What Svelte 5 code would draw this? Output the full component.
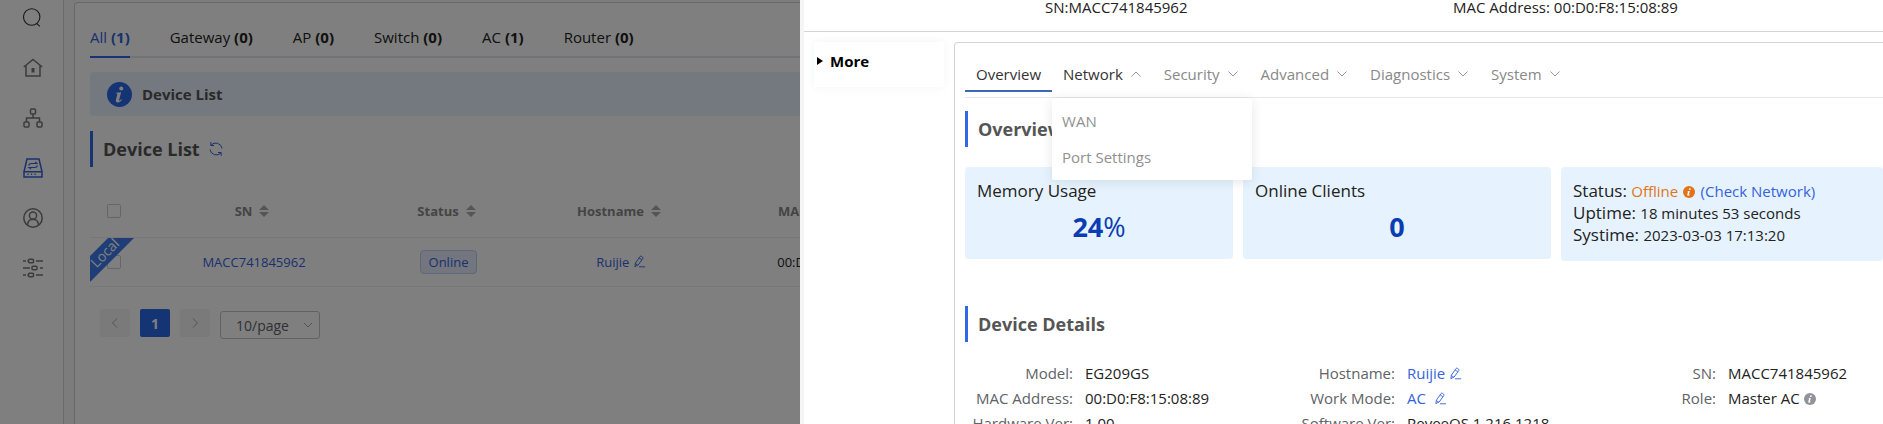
<script lang="ts">
	type Detail = {
		label: string;
		value: string;
		editable?: boolean;
		info?: boolean;
	};

	const tabs = [
		{ name: 'All', count: 1 },
		{ name: 'Gateway', count: 0 },
		{ name: 'AP', count: 0 },
		{ name: 'Switch', count: 0 },
		{ name: 'AC', count: 1 },
		{ name: 'Router', count: 0 },
	];

	const columns = ['SN', 'Status', 'Hostname', 'MAC Address'];

	const menus = ['Network', 'Security', 'Advanced', 'Diagnostics', 'System'];

	const networkItems = ['WAN', 'Port Settings'];

	const details: Detail[] = [
		{ label: 'Model', value: 'EG209GS' },
		{ label: 'Hostname', value: 'Ruijie', editable: true },
		{ label: 'SN', value: 'MACC741845962' },
		{ label: 'MAC Address', value: '00:D0:F8:15:08:89' },
		{ label: 'Work Mode', value: 'AC\u00a0', editable: true },
		{ label: 'Role', value: 'Master AC', info: true },
		{ label: 'Hardware Ver', value: '1.00' },
		{ label: 'Software Ver', value: 'ReyeeOS 1.216.1218' },
	];

	let activeTab = $state('All');
	let openMenu = $state('Network');
	let checkedAll = $state(false);
	let checkedRow = $state(false);
	let pageSize = $state('10');

	function toggleMenu(name: string) {
		openMenu = openMenu === name ? '' : name;
	}
</script>

{#snippet editIcon()}
	<svg class="edit" viewBox="0 0 14 14" aria-hidden="true">
		<path d="M2 12.5 2.6 8.8 7.6 1.6Q8.2.9 9 1.4L10.4 2.4Q11.1 3 10.6 3.8L5.6 10.7ZM6.6 3.1 9.4 5.1M2.5 9.2 5 10.9M6.5 12.7H13" />
	</svg>
{/snippet}

{#snippet infoIcon()}
	<svg class="info" viewBox="0 0 24 24" aria-hidden="true">
		<circle cx="12" cy="12" r="12" fill="currentColor" />
		<circle cx="13.7" cy="6.2" r="1.9" fill="#fff" />
		<path d="M9 10.3 13.6 9.8 11.5 17.5Q11.3 18.6 13.8 16.6L14.3 17.2Q11.8 19.8 10 19.6 8 19.3 8.6 17L10 11.6 8.8 11.1Z" fill="#fff" />
	</svg>
{/snippet}

<div class="app">
	<nav class="sidebar" aria-label="Main">
		<a class="search" href="#search" aria-label="Search">
			<svg viewBox="0 0 20 20"><circle cx="8.7" cy="9" r="8.2" /><path d="m13.6 15.3 3.2 3" /></svg>
		</a>
		<a href="#home" aria-label="Home">
			<svg viewBox="0 0 20 20">
				<path d="M.8 9 10 1.5 19.2 9M3 7.8V18H17V7.8" />
				<path d="M10 10v4.5" stroke-width="3" />
			</svg>
		</a>
		<a href="#topology" aria-label="Topology">
			<svg viewBox="0 0 20 20">
				<rect x="7.5" y="1" width="5" height="5" rx="1" />
				<rect x="1" y="14" width="5" height="5" rx="1" />
				<rect x="14" y="14" width="5" height="5" rx="1" />
				<path d="M10 6v4M3.5 14v-4h13v4" />
			</svg>
		</a>
		<a class="active" href="#devices" aria-label="Devices">
			<svg viewBox="0 0 20 20">
				<path d="M4 1H16L19 13.5V19H1V13.5ZM1 13.8H19" />
				<path stroke-width="1.1" d="M5.5 7.5Q6 5.5 8.5 5.5H14L12 3.8M14.5 7.5Q14 9.5 11.5 9.5H6L8 11.2" />
				<path d="M4.5 16.3h1.2M8 16.3h1.2M11.5 16.3h1.2" />
			</svg>
		</a>
		<a href="#clients" aria-label="Clients">
			<svg viewBox="0 0 20 20">
				<circle cx="10" cy="10" r="9.2" />
				<circle cx="10" cy="7.5" r="3.6" />
				<path d="M4.5 17Q4.8 11.3 10 11.2 15.2 11.3 15.5 17" />
			</svg>
		</a>
		<a href="#settings" aria-label="Settings">
			<svg viewBox="0 0 20 20">
				<path d="M0 3h3M13 3h7M0 10h7M17 10h3M0 17h3M13 17h7M4.5 3h1M4.5 17h1" />
				<rect x="5.5" y="1.2" width="5" height="3.6" rx="1" />
				<rect x="9" y="8.2" width="5" height="3.6" rx="1" />
				<rect x="5.5" y="15.2" width="5" height="3.6" rx="1" />
			</svg>
		</a>
	</nav>

	<main class="devices">
		<div class="tabs">
			{#each tabs as tab}
				<button
					type="button"
					aria-pressed={activeTab === tab.name}
					onclick={() => (activeTab = tab.name)}
				>
					{tab.name} <b>({tab.count})</b>
				</button>
			{/each}
		</div>

		<div class="banner">
			{@render infoIcon()}
			<strong>Device List</strong>
		</div>

		<h2 class="title">
			Device List
			<button class="refresh" type="button" aria-label="Refresh">
				<svg viewBox="0 0 16 16">
					<path d="M3 4.2A6.3 6.3 0 0 1 14 7.5M2.8 1.2V4.5H6M13 11.8A6.3 6.3 0 0 1 2 8.5M13.2 14.8V11.5H10" />
				</svg>
			</button>
		</h2>

		<table>
			<colgroup>
				<col class="col-check" />
				<col class="col-sn" />
				<col class="col-status" />
				<col class="col-host" />
				<col class="col-mac" />
				<col />
			</colgroup>
			<thead>
				<tr>
					<th class="check"><input type="checkbox" aria-label="Select all" bind:checked={checkedAll} /></th>
					{#each columns as column}
						<th>
							<span class="sort">
								{column}
								<svg viewBox="0 0 10 12" aria-hidden="true"><path d="M0 5 5 0 10 5ZM0 7 5 12 10 7Z" /></svg>
							</span>
						</th>
					{/each}
					<th></th>
				</tr>
			</thead>
			<tbody>
				<tr>
					<td class="check">
						<input type="checkbox" aria-label="Select MACC741845962" bind:checked={checkedRow} />
						<span class="ribbon"><span>Local</span></span>
					</td>
					<td><a href="#device">MACC741845962</a></td>
					<td><span class="tag">Online</span></td>
					<td><a class="host" href="#hostname">Ruijie {@render editIcon()}</a></td>
					<td>00:D0:F8:15:08:89</td>
					<td></td>
				</tr>
			</tbody>
		</table>

		<div class="pagination">
			<button type="button" disabled aria-label="Previous page">
				<svg viewBox="0 0 12 12"><path d="M8 1.5 3.5 6 8 10.5" /></svg>
			</button>
			<button class="current" type="button">1</button>
			<button type="button" disabled aria-label="Next page">
				<svg viewBox="0 0 12 12"><path d="M4 1.5 8.5 6 4 10.5" /></svg>
			</button>
			<div class="page-size">
				<select aria-label="Page size" bind:value={pageSize}>
					<option value="10">10/page</option>
					<option value="20">20/page</option>
				</select>
				<svg viewBox="0 0 12 12" aria-hidden="true"><path d="M2 4 6 8 10 4" /></svg>
			</div>
		</div>
	</main>
</div>

<div class="mask"></div>

<div class="drawer" role="dialog" aria-label="Device">
	<header>
		<span>SN:MACC741845962</span>
		<span>MAC Address: 00:D0:F8:15:08:89</span>
	</header>

	<div class="body">
		<details>
			<summary>
				<svg viewBox="0 0 6 8" aria-hidden="true"><path d="M0 0 6 4 0 8Z" /></svg>
				More
			</summary>
		</details>

		<section class="panel">
			<nav class="menu" aria-label="Device settings">
				<button class="selected" type="button">Overview</button>
				{#each menus as menu}
					<div class="menu-item">
						<button
							type="button"
							aria-expanded={openMenu === menu}
							onclick={() => toggleMenu(menu)}
						>
							{menu}
							<svg viewBox="0 0 12 12" aria-hidden="true"><path d="M1.5 3.5 6 8 10.5 3.5" /></svg>
						</button>
						{#if menu === 'Network' && openMenu === menu}
							<div class="dropdown">
								{#each networkItems as item}
									<a href="#network">{item}</a>
								{/each}
							</div>
						{/if}
					</div>
				{/each}
			</nav>

			<h2 class="title">Overview</h2>

			<div class="cards">
				<div class="card">
					<div>Memory Usage</div>
					<div class="number"><b>24</b>%</div>
				</div>
				<div class="card">
					<div>Online Clients</div>
					<div class="number"><b>0</b></div>
				</div>
				<div class="card">
					<div>
						Status:
						<small class="offline">Offline {@render infoIcon()}</small>
						<small><a href="#check">(Check Network)</a></small>
					</div>
					<div>Uptime: <small>18 minutes 53 seconds</small></div>
					<div>Systime: <small>2023-03-03 17:13:20</small></div>
				</div>
			</div>

			<h2 class="title">Device Details</h2>

			<dl>
				{#each details as detail}
					<div>
						<dt>{detail.label}:</dt>
						<dd>
							{#if detail.editable}
								<a href="#edit">{detail.value} {@render editIcon()}</a>
							{:else}
								{detail.value}
							{/if}
							{#if detail.info}
								{@render infoIcon()}
							{/if}
						</dd>
					</div>
				{/each}
			</dl>
		</section>
	</div>
</div>

<style>
	:global(body) {
		height: 100vh;
		overflow: hidden;
		font-family: 'Open Sans', 'Noto Sans', sans-serif;
		font-size: 15px;
		color: #222;
		background: #f8f8f8;
	}

	button {
		padding: 0;
		font: inherit;
		color: inherit;
		cursor: pointer;
		background: none;
		border: 0;
	}

	a {
		color: #3463dc;
		text-decoration: none;
	}

	svg {
		flex: none;
		fill: none;
		stroke: currentColor;
	}

	.app {
		display: flex;
		gap: 10px;
		height: 100vh;
	}

	.sidebar {
		box-sizing: border-box;
		display: flex;
		flex: none;
		flex-direction: column;
		gap: 30px;
		align-items: center;
		width: 64px;
		padding: 8px 0 0 2px;
		background: #fff;
		border-right: 1px solid #d4d4d4;
	}

	.sidebar a {
		height: 20px;
		color: #777;
	}

	.sidebar svg {
		width: 20px;
		height: 20px;
		stroke-width: 1.5;
	}

	.sidebar .search {
		color: #333;
	}

	.sidebar .search svg {
		stroke-width: 1.1;
	}

	.sidebar .active {
		color: #3463dc;
	}

	.devices {
		flex: 1;
		min-width: 0;
		padding: 16px 15px;
		margin-top: 2px;
		background: #fff;
		border: 1px solid #d0d0d0;
		border-bottom: 0;
		border-radius: 4px 0 0;
	}

	.tabs {
		display: flex;
		gap: 40px;
		border-bottom: 2px solid #e4e7ed;
	}

	.tabs button {
		height: 39px;
		padding-bottom: 2px;
		margin-bottom: -2px;
		border-bottom: 2px solid transparent;
	}

	.tabs button[aria-pressed='true'] {
		color: #3463dc;
		border-color: #2b68e8;
	}

	.banner {
		display: flex;
		gap: 10px;
		align-items: center;
		height: 44px;
		padding: 0 17px;
		margin: 14px 0 15px;
		color: #555;
		background: #e8f2ff;
		border-radius: 4px;
	}

	.info {
		width: 12px;
		height: 12px;
		stroke: none;
	}

	.banner .info {
		width: 25px;
		height: 25px;
		color: #2b68e8;
	}

	.title {
		display: flex;
		gap: 8px;
		align-items: center;
		height: 36px;
		padding-left: 10px;
		margin: 0;
		font-size: 18px;
		color: #555;
		border-left: 3px solid #2f68e8;
	}

	.refresh {
		display: flex;
		color: #3463dc;
	}

	.refresh svg {
		width: 16px;
		height: 16px;
	}

	table {
		width: 100%;
		margin-top: 18px;
		font-size: 13px;
		table-layout: fixed;
		border-collapse: collapse;
	}

	.col-check {
		width: 58px;
	}

	.col-sn {
		width: 212px;
	}

	.col-status {
		width: 177px;
	}

	.col-host {
		width: 168px;
	}

	.col-mac {
		width: 252px;
	}

	th,
	td {
		height: 48px;
		padding: 0;
		text-align: center;
		border-bottom: 1px solid #ebeef5;
	}

	th {
		height: 52px;
		color: #888;
	}

	.check {
		position: relative;
		text-align: left;
	}

	input {
		box-sizing: border-box;
		display: block;
		width: 14px;
		height: 14px;
		margin: 0 17px;
		appearance: none;
		background: #fff;
		border: 1px solid #ccc;
		border-radius: 2px;
	}

	input:checked {
		background: #2b68e8;
	}

	.sort {
		display: inline-flex;
		gap: 7px;
		align-items: center;
		padding-right: 4px;
	}

	.sort svg {
		width: 10px;
		height: 12px;
		fill: #aaa;
		stroke: none;
	}

	/* corner ribbon lies over the row's checkbox */
	.ribbon {
		position: absolute;
		top: 0;
		left: 0;
		box-sizing: border-box;
		display: flex;
		align-items: center;
		justify-content: center;
		width: 44px;
		height: 44px;
		padding: 0 14px 14px 0;
		color: #fff;
		background: #3f7df0;
		clip-path: polygon(41% 0, 100% 0, 0 100%, 0 41%);
	}

	.ribbon span {
		font-size: 14px;
		line-height: 14px;
		transform: rotate(-45deg);
	}

	.tag {
		display: inline-block;
		padding: 0 8px;
		line-height: 22px;
		color: #3463dc;
		background: #e6edff;
		border: 1px solid #bccdf8;
		border-radius: 4px;
	}

	.edit {
		width: 13px;
		height: 13px;
		vertical-align: -1px;
	}

	.pagination {
		display: flex;
		gap: 10px;
		padding: 22px 10px;
		font-size: 14px;
	}

	.pagination button {
		display: flex;
		align-items: center;
		justify-content: center;
		width: 30px;
		height: 28px;
		color: #aaa;
		background: #f4f4f5;
		border-radius: 2px;
	}

	.pagination svg {
		width: 12px;
		height: 12px;
	}

	.pagination .current {
		font-weight: bold;
		color: #fff;
		background: #2b68e8;
	}

	.page-size {
		display: grid;
		align-items: center;
		width: 100px;
		margin-top: 2px;
		color: #aaa;
	}

	.page-size select,
	.page-size svg {
		grid-area: 1 / 1;
	}

	.page-size select {
		height: 28px;
		padding: 0 15px;
		font: inherit;
		color: #606266;
		appearance: none;
		background: none;
		border: 1px solid #c4c4c4;
		border-radius: 3px;
	}

	.page-size svg {
		justify-self: end;
		margin-right: 6px;
		pointer-events: none;
	}

	.mask {
		position: fixed;
		inset: 0;
		background: rgb(0 0 0 / 50%);
	}

	.drawer {
		position: fixed;
		inset: 0 0 0 auto;
		box-sizing: border-box;
		width: calc(100% - 800px);
		min-width: 50%;
		overflow: hidden;
		background: #fff;
		border-left: 4px solid #f5f5f5;
	}

	header {
		display: grid;
		grid-template-columns: 408fr 430fr;
		padding: 0 0 17px 241px;
		line-height: 14px;
		border-bottom: 1px solid #d4d4d4;
	}

	.body {
		display: flex;
		gap: 10px;
		align-items: flex-start;
		padding: 10px 0 0 10px;
	}

	details {
		flex: none;
		width: 130px;
		box-shadow: 0 0 8px rgb(0 60 120 / 6%);
	}

	summary {
		display: flex;
		gap: 7px;
		align-items: center;
		padding: 0 3px 7px;
		font-weight: bold;
		line-height: 38px;
		color: #000;
		list-style: none;
		cursor: pointer;
	}

	summary svg {
		width: 6px;
		height: 8px;
		fill: #000;
		stroke: none;
	}

	.panel {
		flex: 1;
		min-width: 0;
		padding: 16px 0 0 10px;
		border: 1px solid #d4d4d4;
		border-right: 0;
		border-radius: 4px 0 0;
	}

	.menu {
		display: flex;
		height: 38px;
		margin-bottom: 13px;
		border-bottom: 1px solid #e4e7ed;
	}

	.menu button {
		display: flex;
		gap: 7px;
		align-items: center;
		height: 33px;
		padding: 0 11px 2px;
		color: #888;
		border-bottom: 2px solid transparent;
	}

	.menu .selected {
		color: #333;
		border-color: #3f66bd;
	}

	.menu button[aria-expanded='true'] {
		color: #333;
	}

	.menu svg {
		width: 12px;
		height: 12px;
		color: #999;
	}

	.menu button[aria-expanded='true'] svg {
		transform: rotate(180deg);
	}

	.menu-item {
		position: relative;
	}

	.dropdown {
		position: absolute;
		top: 39px;
		left: 0;
		z-index: 1;
		box-sizing: border-box;
		width: 200px;
		padding: 5px 10px;
		background: #fff;
		border-radius: 2px;
		box-shadow: 0 2px 12px rgb(0 0 0 / 10%);
	}

	.dropdown a {
		display: block;
		line-height: 36px;
		color: #909090;
	}

	.cards {
		display: grid;
		grid-template-columns: 268fr 308fr 322fr;
		gap: 10px;
		align-items: start;
		margin: 20px 0 45px;
	}

	.card {
		padding: 13px 12px 15px;
		font-size: 17px;
		line-height: 22px;
		white-space: nowrap;
		background: #e6f3fe;
		border-radius: 4px;
	}

	.card small {
		font-size: 15px;
	}

	.number {
		padding-top: 8px;
		font-size: 27px;
		line-height: 34px;
		color: #0a3cb4;
		text-align: center;
	}

	.offline {
		color: #e37318;
	}

	.offline .info {
		margin: 0 1px;
		vertical-align: -1px;
	}

	dl {
		display: grid;
		grid-template-columns: 322fr 321fr 275fr;
		margin: 19px 0 0;
		font-size: 15px;
		line-height: 25px;
		white-space: nowrap;
	}

	dl div {
		display: flex;
		min-width: 0;
	}

	dt {
		flex: none;
		width: 108px;
		color: #606266;
		text-align: right;
	}

	dd {
		margin: 0 0 0 12px;
	}

	dd .info {
		color: #909399;
		vertical-align: -1px;
	}
</style>
